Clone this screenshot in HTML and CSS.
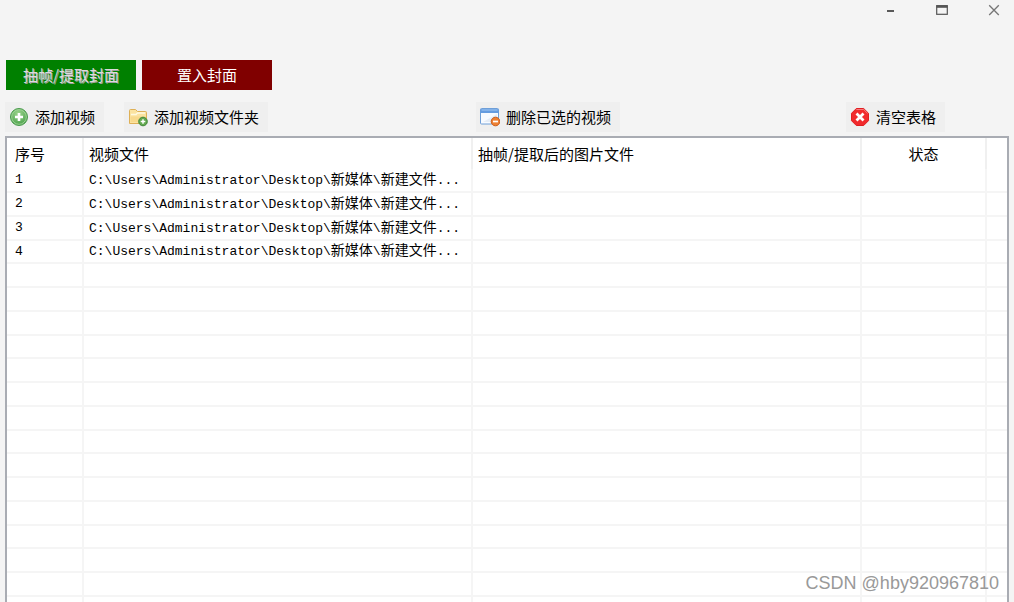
FILE: index.html
```html
<!DOCTYPE html>
<html lang="zh-CN">
<head>
<meta charset="utf-8">
<title>抽帧/提取封面</title>
<link rel="stylesheet" href="styles.css">
</head>
<body>
<div class="window">
  <header class="titlebar">
    <button class="win-btn" type="button" aria-label="最小化"><svg width="16" height="16" viewBox="0 0 16 16"><path d="M5 9H12" stroke="#333" stroke-width="1.600"/></svg></button>
    <button class="win-btn" type="button" aria-label="最大化"><svg width="16" height="16" viewBox="0 0 16 16"><rect x="2.700" y="3.700" width="10.600" height="8.600" fill="none" stroke="#555" stroke-width="1.200"/><path d="M2.500 4.500H13.500" stroke="#555" stroke-width="2.600"/></svg></button>
    <button class="win-btn" type="button" aria-label="关闭"><svg width="16" height="16" viewBox="0 0 16 16"><path d="M3.200 3.200L12.800 13M12.800 3.200L3.200 13" stroke="#777" stroke-width="1.300"/></svg></button>
  </header>
  <nav class="tabs">
    <button class="tab tab-active" type="button">抽帧/提取封面</button>
    <button class="tab tab-cover" type="button">置入封面</button>
  </nav>
  <div class="toolbar">
    <button class="tool" type="button">
      <svg width="20" height="20" viewBox="0 0 20 20"><defs><radialGradient id="g" cx=".45" cy=".3" r=".7"><stop offset="0" stop-color="#9bd48c"/><stop offset="1" stop-color="#49a04a"/></radialGradient></defs><circle cx="10" cy="10" r="8.500" fill="url(#g)" stroke="#4a9a4e"/><circle cx="10" cy="10" r="7.300" fill="none" stroke="#a9d9a0" stroke-width=".8"/><path d="M10 6v8M6 10h8" stroke="#fff" stroke-width="2.600"/></svg>
      <span>添加视频</span></button>
    <button class="tool" type="button">
      <svg width="20" height="20" viewBox="0 0 20 20"><path d="M1.500 16.500V3.500q0-1 1-1h5l2 2h8q1 0 1 1v11z" fill="#fbe3a0" stroke="#deb057"/><path d="M3 7.500h5l1.500-1.500H17" fill="none" stroke="#fff9df" stroke-width="1.400"/><path d="M2.500 15V9.500h15V15z" fill="#f8d98c"/><circle cx="15" cy="14.500" r="4.300" fill="#63a950" stroke="#3f8538"/><path d="M15 12.200v4.600M12.700 14.500h4.600" stroke="#fff" stroke-width="1.500"/></svg>
      <span>添加视频文件夹</span></button>
    <button class="tool" type="button">
      <svg width="20" height="20" viewBox="0 0 20 20"><rect x=".5" y="1.500" width="18" height="15.500" rx="1" fill="#f8fbff" stroke="#6f9fd8"/><path d="M.5 2h18v4H.5z" fill="#659ce0"/><path d="M1.500 3h16" stroke="#a3c8f2"/><path d="M3 15L17 7v8z" fill="#e5edf7"/><circle cx="15.500" cy="14.500" r="4.300" fill="#ee8133" stroke="#c95c1b"/><path d="M13 14.500h5" stroke="#fff" stroke-width="1.700"/></svg>
      <span>删除已选的视频</span></button>
    <button class="tool" type="button">
      <svg width="20" height="20" viewBox="0 0 20 20"><path d="M6.300 1.500h7.400l4.800 4.800v7.400l-4.800 4.800H6.300l-4.800-4.800V6.300z" fill="#f12b2d" stroke="#e01f22"/><path d="M6.300 2.500h7.400l3.800 3.800" fill="none" stroke="#f9787a"/><path d="M6.500 6.500l7 7M13.500 6.500l-7 7" stroke="#fff" stroke-width="2.800"/></svg>
      <span>清空表格</span></button>
  </div>
  <main class="list">
    <table class="grid">
      <colgroup><col class="c-no"><col class="c-file"><col class="c-file"><col class="c-state"><col></colgroup>
      <thead><tr><th>序号</th><th>视频文件</th><th>抽帧/提取后的图片文件</th><th class="center">状态</th><td></td></tr></thead>
      <tbody>
        <tr><td>1</td><td>C:\Users\Administrator\Desktop\<span class="cjk">新媒体</span>\<span class="cjk">新建文件</span>...</td><td></td><td></td><td></td></tr>
        <tr><td>2</td><td>C:\Users\Administrator\Desktop\<span class="cjk">新媒体</span>\<span class="cjk">新建文件</span>...</td><td></td><td></td><td></td></tr>
        <tr><td>3</td><td>C:\Users\Administrator\Desktop\<span class="cjk">新媒体</span>\<span class="cjk">新建文件</span>...</td><td></td><td></td><td></td></tr>
        <tr><td>4</td><td>C:\Users\Administrator\Desktop\<span class="cjk">新媒体</span>\<span class="cjk">新建文件</span>...</td><td></td><td></td><td></td></tr>
        <tr><td></td><td></td><td></td><td></td><td></td></tr>
        <tr><td></td><td></td><td></td><td></td><td></td></tr>
        <tr><td></td><td></td><td></td><td></td><td></td></tr>
        <tr><td></td><td></td><td></td><td></td><td></td></tr>
        <tr><td></td><td></td><td></td><td></td><td></td></tr>
        <tr><td></td><td></td><td></td><td></td><td></td></tr>
        <tr><td></td><td></td><td></td><td></td><td></td></tr>
        <tr><td></td><td></td><td></td><td></td><td></td></tr>
        <tr><td></td><td></td><td></td><td></td><td></td></tr>
        <tr><td></td><td></td><td></td><td></td><td></td></tr>
        <tr><td></td><td></td><td></td><td></td><td></td></tr>
        <tr><td></td><td></td><td></td><td></td><td></td></tr>
        <tr><td></td><td></td><td></td><td></td><td></td></tr>
        <tr><td></td><td></td><td></td><td></td><td></td></tr>
        <tr><td></td><td></td><td></td><td></td><td></td></tr>
      </tbody>
    </table>
  </main>
  <div class="watermark">CSDN @hby920967810</div>
</div>
</body>
</html>
```
FILE: styles.css
```css
* { box-sizing: border-box; }

body {
  margin: 0;
  background: #f4f4f4;
  color: #000;
  font: 15px/20px "Noto Sans CJK SC", sans-serif;
}

button {
  border: 0;
  padding: 0;
  font: inherit;
  color: inherit;
}

.window {
  position: relative;
  display: flex;
  flex-direction: column;
  height: 100vh;
  overflow: hidden;
}

.titlebar {
  display: flex;
  justify-content: flex-end;
  gap: 36px;
  height: 60px;
  flex: none;
  padding: 2px 12px 0 0;
}

.win-btn {
  width: 16px;
  height: 16px;
  background: none;
}

.win-btn svg { display: block; }

.tabs {
  display: flex;
  flex: none;
  gap: 6px;
  padding-left: 6px;
}

.tab {
  width: 130px;
  height: 30px;
  color: #fff;
}

.tab-active {
  background: #008000;
  color: #dcdcdc;
  text-shadow: 1px 1px 0 #a0a0a0;
}

.tab-cover { background: #800000; }

.toolbar {
  display: grid;
  grid-template-columns: 119fr 352fr 370fr 168fr;
  flex: none;
  padding: 12px 0 4px 5px;
}

.tool {
  display: flex;
  align-items: center;
  justify-self: start;
  gap: 6px;
  height: 30px;
  padding: 0 9px 0 4px;
  background: #efefef;
  white-space: nowrap;
}

.list {
  flex: 1;
  min-height: 0;
  overflow: hidden;
  margin: 0 5px;
  border: 2px solid #a9acb3;
  border-bottom: 0;
  background: #fff;
}

.grid {
  width: 100%;
  table-layout: fixed;
  border-collapse: separate;
  border-spacing: 0;
}

.c-no { width: 77px; }
.c-file { width: 389px; }
.c-state { width: 125px; }

.grid th,
.grid td {
  padding: 0 0 0 5px;
  text-align: left;
  font-weight: 400;
  white-space: nowrap;
}

.grid th:first-child,
.grid td:first-child { padding-left: 8px; }

.grid thead tr { height: 31px; }

.grid th {
  border-right: 2px solid #f0f0f0;
}

.grid th.center {
  padding-left: 0;
  text-align: center;
}

.grid tbody tr { height: 24px; }
.grid tbody tr:nth-child(4n) { height: 23px; }

.grid tbody td {
  border-right: 2px solid #f5f5f5;
  border-bottom: 2px solid #f5f5f5;
  font-family: "Liberation Mono", "Noto Sans CJK SC", monospace;
  font-size: 13px;
  line-height: 18px;
}

.grid tbody td:last-child { border-right: 0; }

.cjk {
  font-family: "Noto Sans CJK SC", sans-serif;
  font-size: 14px;
  line-height: 1;
}

.watermark {
  position: absolute;
  right: 15px;
  bottom: 9px;
  color: #999;
  font: 18px/20px "Liberation Sans", sans-serif;
}
```
